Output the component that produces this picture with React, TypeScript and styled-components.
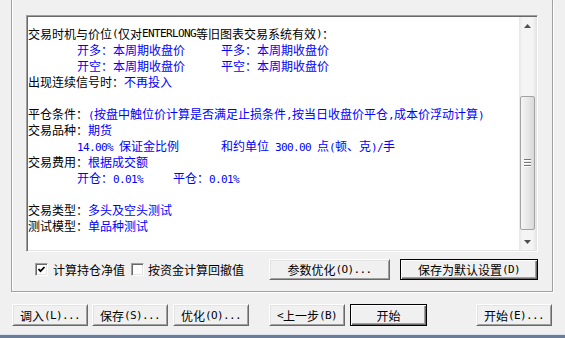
import React from "react";
import styled, { createGlobalStyle } from "styled-components";

const GlobalStyle = createGlobalStyle`
  html, body {
    margin: 0;
    padding: 0;
    background: #f0f0f0;
  }
  body {
    font-family: "Noto Sans CJK SC", "Noto Sans", sans-serif;
    font-size: 12px;
    color: #000;
  }
`;

const Window = styled.div`
  width: 565px;
  height: 338px;
  display: flex;
  flex-direction: column;
  overflow: hidden;
  background: #f0f0f0;
`;

const Group = styled.div`
  margin-left: 11px;
  width: 542px;
  height: 292px;
  box-sizing: border-box;
  border: 1px solid #a0a0a0;
  border-top: none;
  box-shadow: inset 1px 0 0 #fff, 1px 1px 0 #fff;
  padding: 15px 14px 0 14px;
  display: flex;
  flex-direction: column;
`;

const TextBox = styled.div`
  width: 512px;
  height: 237px;
  box-sizing: border-box;
  padding: 1px;
  border: 1px solid;
  border-color: #a0a0a0 #fff #fff #a0a0a0;
  box-shadow: inset 1px 1px 0 #696969, inset -1px -1px 0 #e3e3e3;
  background: #fff;
  display: flex;
`;

const Content = styled.div`
  flex: 1;
  padding: 9px 0 0 0;
  overflow: hidden;
`;

const Line = styled.div<{ $indent?: boolean }>`
  display: flex;
  height: 16px;
  line-height: 16px;
  white-space: pre;
  padding-left: ${(p) => (p.$indent ? "49px" : "0")};
`;

const Cell = styled.span<{ $w?: number }>`
  width: ${(p) => (p.$w ? `${p.$w}px` : "auto")};
  flex-shrink: 0;
`;

const Label = styled.span<{ $blue?: boolean }>`
  color: ${(p) => (p.$blue ? "#0000ff" : "#000")};
`;

const Latin = styled.span`
  font-family: "DejaVu Sans Mono", "Liberation Mono", monospace;
  font-size: 11px;
  letter-spacing: -0.62px;
  white-space: pre;
`;

const Scrollbar = styled.div`
  width: 17px;
  display: flex;
  flex-direction: column;
  background: linear-gradient(to right, #e6e6e6, #f4f4f4 20%, #f4f4f4 80%, #e6e6e6);
`;

const Arrow = styled.div`
  height: 17px;
  display: flex;
  align-items: center;
  justify-content: center;
  flex-shrink: 0;
`;

const Track = styled.div`
  flex: 1;
  display: flex;
  flex-direction: column;
  padding: 62px 1px 3px 1px;
`;

const Thumb = styled.div`
  height: 134px;
  box-sizing: border-box;
  border: 1px solid #a3a3a3;
  border-radius: 2px;
  background: linear-gradient(to right, #f5f5f5, #e8e8e8 50%, #d9d9d9);
  display: flex;
  flex-direction: column;
  align-items: center;
  justify-content: center;
  gap: 1px;
`;

const Grip = styled.div`
  width: 7px;
  height: 1px;
  background: #777;
  border-bottom: 1px solid #fff;
`;

const CheckRow = styled.div`
  display: flex;
  align-items: center;
  height: 21px;
  margin-top: 7px;
  padding-left: 9px;
`;

const Box = styled.span`
  width: 13px;
  height: 13px;
  flex-shrink: 0;
  box-sizing: border-box;
  border: 1px solid;
  border-color: #a0a0a0 #fff #fff #a0a0a0;
  box-shadow: inset 1px 1px 0 #696969, inset -1px -1px 0 #e3e3e3;
  background: #fff;
  display: flex;
  align-items: center;
  justify-content: center;
`;

const CheckLabel = styled.span<{ $ml: number; $gap: number }>`
  display: flex;
  align-items: center;
  flex-shrink: 0;
  white-space: nowrap;
  gap: ${(p) => p.$gap}px;
  margin-left: ${(p) => p.$ml}px;
`;

const Button = styled.div<{ $w: number; $h: number; $ml: number; $default?: boolean }>`
  width: ${(p) => p.$w}px;
  height: ${(p) => p.$h}px;
  margin-left: ${(p) => p.$ml}px;
  flex-shrink: 0;
  box-sizing: border-box;
  display: flex;
  align-items: center;
  justify-content: center;
  white-space: pre;
  background: #f0f0f0;
  border: 1px solid;
  border-color: ${(p) => (p.$default ? "#000" : "#fff #696969 #696969 #fff")};
  box-shadow: ${(p) =>
    p.$default
      ? "inset 1px 1px 0 #fff, inset -1px -1px 0 #696969, inset -2px -2px 0 #a0a0a0"
      : "inset 1px 1px 0 #e3e3e3, inset -1px -1px 0 #a0a0a0"};
`;

const BottomRow = styled.div`
  display: flex;
  margin-top: 12px;
`;

const Frame = styled.div`
  margin-top: auto;
  height: 3px;
  border-top: 1px solid #dde3ec;
  background: #6c7b98;
`;

const isLatin = /^[\x20-\x7e]+$/;

const Txt = ({ children }: { children: string }) => (
  <>
    {children
      .split(/([\x20-\x7e]+)/)
      .filter(Boolean)
      .map((part, i) => (isLatin.test(part) ? <Latin key={i}>{part}</Latin> : part))}
  </>
);

const ArrowIcon = ({ up }: { up?: boolean }) => (
  <svg width="7" height="4" viewBox="0 0 7 4">
    <polygon points={up ? "0,4 7,4 3.5,0" : "0,0 7,0 3.5,4"} fill="#505050" />
  </svg>
);

const CheckMark = () => (
  <svg width="9" height="9" viewBox="0 0 9 9">
    <polyline points="1.5,4 3.5,6.2 7.5,2" fill="none" stroke="#000" strokeWidth="1.8" />
  </svg>
);

const App = () => {
  return (
    <>
      <GlobalStyle />
      <Window>
        <Group>
          <TextBox>
            <Content>
              <Line>
                <Txt>交易时机与价位(仅对ENTERLONG等旧图表交易系统有效)：</Txt>
              </Line>
              <Line $indent>
                <Cell $w={144}>
                  <Label $blue>开多：本周期收盘价</Label>
                </Cell>
                <Label $blue>平多：本周期收盘价</Label>
              </Line>
              <Line $indent>
                <Cell $w={144}>
                  <Label $blue>开空：本周期收盘价</Label>
                </Cell>
                <Label $blue>平空：本周期收盘价</Label>
              </Line>
              <Line>
                出现连续信号时：<Label $blue>不再投入</Label>
              </Line>
              <Line />
              <Line>
                平仓条件：
                <Label $blue>
                  <Txt>
                    {"(按盘中触位价计算是否满足止损条件,按当日收盘价平仓,成本价浮动计算)"}
                  </Txt>
                </Label>
              </Line>
              <Line>
                交易品种：<Label $blue>期货</Label>
              </Line>
              <Line $indent>
                <Cell $w={144}>
                  <Label $blue>
                    <Txt>14.00% 保证金比例</Txt>
                  </Label>
                </Cell>
                <Label $blue>
                  <Txt>和约单位 300.00 点(顿、克)/手</Txt>
                </Label>
              </Line>
              <Line>
                交易费用：<Label $blue>根据成交额</Label>
              </Line>
              <Line $indent>
                <Cell $w={96}>
                  <Label $blue>
                    <Txt>开仓：0.01%</Txt>
                  </Label>
                </Cell>
                <Label $blue>
                  <Txt>平仓：0.01%</Txt>
                </Label>
              </Line>
              <Line />
              <Line>
                交易类型：<Label $blue>多头及空头测试</Label>
              </Line>
              <Line>
                测试模型：<Label $blue>单品种测试</Label>
              </Line>
            </Content>
            <Scrollbar>
              <Arrow>
                <ArrowIcon up />
              </Arrow>
              <Track>
                <Thumb>
                  <Grip />
                  <Grip />
                  <Grip />
                </Thumb>
              </Track>
              <Arrow>
                <ArrowIcon />
              </Arrow>
            </Scrollbar>
          </TextBox>

          <CheckRow>
            <CheckLabel $ml={0} $gap={5}>
              <Box>
                <CheckMark />
              </Box>
              计算持仓净值
            </CheckLabel>
            <CheckLabel $ml={6} $gap={4}>
              <Box />
              按资金计算回撤值
            </CheckLabel>
            <Button $w={121} $h={21} $ml={25}>
              <Txt>参数优化(O)...</Txt>
            </Button>
            <Button $w={138} $h={21} $ml={10} $default>
              <Txt>保存为默认设置(D)</Txt>
            </Button>
          </CheckRow>
        </Group>

        <BottomRow>
          <Button $w={76} $h={22} $ml={12}>
            <Txt>调入(L)...</Txt>
          </Button>
          <Button $w={76} $h={22} $ml={4}>
            <Txt>保存(S)...</Txt>
          </Button>
          <Button $w={76} $h={22} $ml={5}>
            <Txt>优化(O)...</Txt>
          </Button>
          <Button $w={76} $h={22} $ml={20}>
            <Txt>&lt;上一步(B)</Txt>
          </Button>
          <Button $w={77} $h={22} $ml={5} $default>
            开始
          </Button>
          <Button $w={76} $h={22} $ml={49}>
            <Txt>开始(E)...</Txt>
          </Button>
        </BottomRow>
        <Frame />
      </Window>
    </>
  );
};

export default App;
